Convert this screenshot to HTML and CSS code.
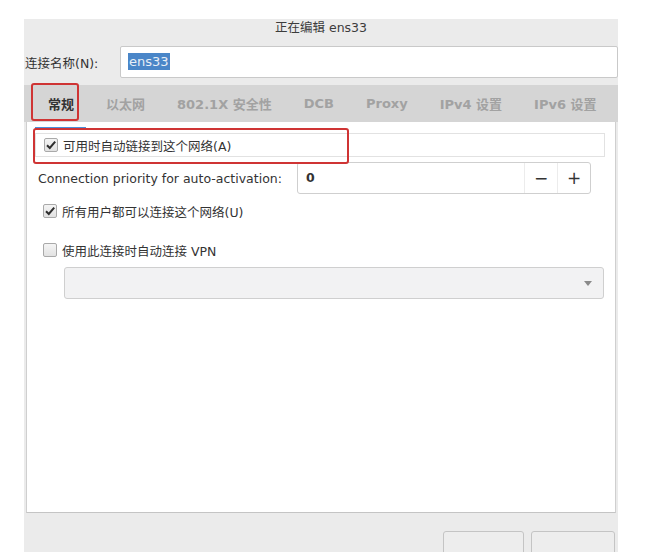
FILE: index.html
```html
<!DOCTYPE html>
<html>
  <head>
    <meta charset="UTF-8">
    <title>正在编辑 ens33</title>
    <link rel="stylesheet" href="styles.css">
  </head>
  <body>
    <div class="dialog">
      <div class="titlebar">正在编辑 ens33</div>
      <div class="name-row">
        <label for="conn-name">连接名称(N):</label>
        <div class="entry"><span class="selected">ens33</span></div>
      </div>
      <div class="tabs">
        <span class="tab active">常规</span>
        <span class="tab">以太网</span>
        <span class="tab">802.1X 安全性</span>
        <span class="tab">DCB</span>
        <span class="tab">Proxy</span>
        <span class="tab">IPv4 设置</span>
        <span class="tab">IPv6 设置</span>
      </div>
      <div class="panel">
        <div class="check-row focused">
          <span class="check on"><svg width="12" height="12" viewBox="0 0 12 12"><path d="M2 6.2 L4.8 9 L10.2 2.6" fill="none" stroke="#2e2e2e" stroke-width="2"/></svg></span>
          <span>可用时自动链接到这个网络(A)</span>
        </div>
        <div class="priority-row">
          <span class="priority-label">Connection priority for auto-activation:</span>
          <div class="spin">
            <span class="spin-value">0</span>
            <span class="spin-btn">&minus;</span>
            <span class="spin-btn">+</span>
          </div>
        </div>
        <div class="check-row">
          <span class="check on"><svg width="12" height="12" viewBox="0 0 12 12"><path d="M2 6.2 L4.8 9 L10.2 2.6" fill="none" stroke="#2e2e2e" stroke-width="2"/></svg></span>
          <span>所有用户都可以连接这个网络(U)</span>
        </div>
        <div class="check-row vpn">
          <span class="check"></span>
          <span>使用此连接时自动连接 VPN</span>
        </div>
        <div class="combo">
          <span class="arrow"></span>
        </div>
      </div>
      <div class="footer">
        <span class="button"></span>
        <span class="button wide"></span>
      </div>
      <div class="mark mark-tab"></div>
      <div class="mark mark-auto"></div>
    </div>
  </body>
</html>
```

FILE: styles.css
```css
html, body {
  margin: 0;
  height: 552px;
  overflow: hidden;
  background: #fff;
}
body {
  font-family: "DejaVu Sans", "Noto Sans CJK SC", sans-serif;
  font-size: 12.5px;
  color: #333;
}
.dialog {
  position: relative;
  width: 594px;
  height: 560px;
  margin: 19px 0 0 24px;
  background: #ebebeb;
}
.titlebar {
  height: 21px;
  line-height: 17px;
  text-align: center;
  font-size: 12.5px;
  color: #3c3c3c;
}
.name-row {
  display: flex;
  align-items: center;
  margin-top: 6px;
  height: 32px;
}
.name-row label {
  width: 95px;
  padding-left: 1px;
  color: #333;
}
.entry {
  box-sizing: border-box;
  width: 498px;
  height: 32px;
  background: #fff;
  border: 1px solid #c9c9c9;
  border-radius: 2px;
  padding: 7px 0 0 7px;
}
.selected {
  background: #4a86c8;
  color: #e8eef6;
  padding: 1px 1px;
  font-size: 13px;
}
.tabs {
  display: flex;
  align-items: center;
  gap: 32px;
  margin-top: 7px;
  height: 37px;
  padding-left: 24px;
  background: #d5d5d5;
}
.tab {
  position: relative;
  font-weight: bold;
  font-size: 13px;
  color: #a2a2a2;
}
.tab.active {
  color: #333;
}
.tab.active::after {
  content: "";
  position: absolute;
  left: -13px;
  right: -12px;
  bottom: -16px;
  height: 2px;
  background: #4a90d9;
}
.panel {
  box-sizing: border-box;
  height: 391px;
  margin: 0 2px;
  background: #fff;
  border-left: 1px solid #cfcfcf;
  border-right: 1px solid #cfcfcf;
  border-bottom: 1px solid #c4c4c4;
  padding-top: 11px;
}
.check-row {
  display: flex;
  align-items: center;
  gap: 5px;
  height: 18px;
  padding-left: 16px;
  margin-top: 8px;
  color: #333;
}
.check-row.focused {
  box-sizing: border-box;
  height: 24px;
  width: 570px;
  margin: 0 0 0 8px;
  padding-left: 8px;
  border: 1px solid #e2e2e2;
}
.check-row.vpn {
  margin-top: 21px;
}
.check {
  box-sizing: border-box;
  width: 14px;
  height: 14px;
  display: flex;
  align-items: center;
  justify-content: center;
  border: 1px solid #a9a9a9;
  border-radius: 2px;
  background: linear-gradient(#f4f4f4, #e2e2e2);
}
.priority-row {
  display: flex;
  align-items: center;
  margin-top: 5px;
  padding-left: 11px;
}
.priority-label {
  flex: 1;
}
.spin {
  box-sizing: border-box;
  display: flex;
  width: 294px;
  height: 32px;
  margin-right: 24px;
  border: 1px solid #cfcfcf;
  border-radius: 3px;
  background: #fff;
}
.spin-value {
  flex: 1;
  line-height: 30px;
  padding-left: 8px;
  font-weight: bold;
  color: #333;
}
.spin-btn {
  width: 32px;
  line-height: 30px;
  text-align: center;
  font-size: 17px;
  color: #333;
  border-left: 1px solid #ececec;
}
.combo {
  box-sizing: border-box;
  position: relative;
  width: 540px;
  height: 32px;
  margin: 8px 0 0 37px;
  background: #f2f2f3;
  border: 1px solid #cfcfcf;
  border-radius: 3px;
}
.arrow {
  position: absolute;
  right: 11px;
  top: 13px;
  border-left: 4px solid transparent;
  border-right: 4px solid transparent;
  border-top: 5px solid #8a8a8a;
}
.footer {
  display: flex;
  justify-content: flex-end;
  gap: 7px;
  padding: 18px 3px 0 0;
}
.button {
  box-sizing: border-box;
  width: 81px;
  height: 30px;
  border: 1px solid #c4c4c4;
  border-radius: 3px;
  background: #ededed;
}
.button.wide {
  width: 84px;
}
.mark {
  position: absolute;
  border: 2px solid #cf3434;
  border-radius: 3px;
}
.mark-tab {
  left: 7px;
  top: 64px;
  width: 44px;
  height: 34px;
}
.mark-auto {
  left: 9px;
  top: 109px;
  width: 312px;
  height: 32px;
}
```
